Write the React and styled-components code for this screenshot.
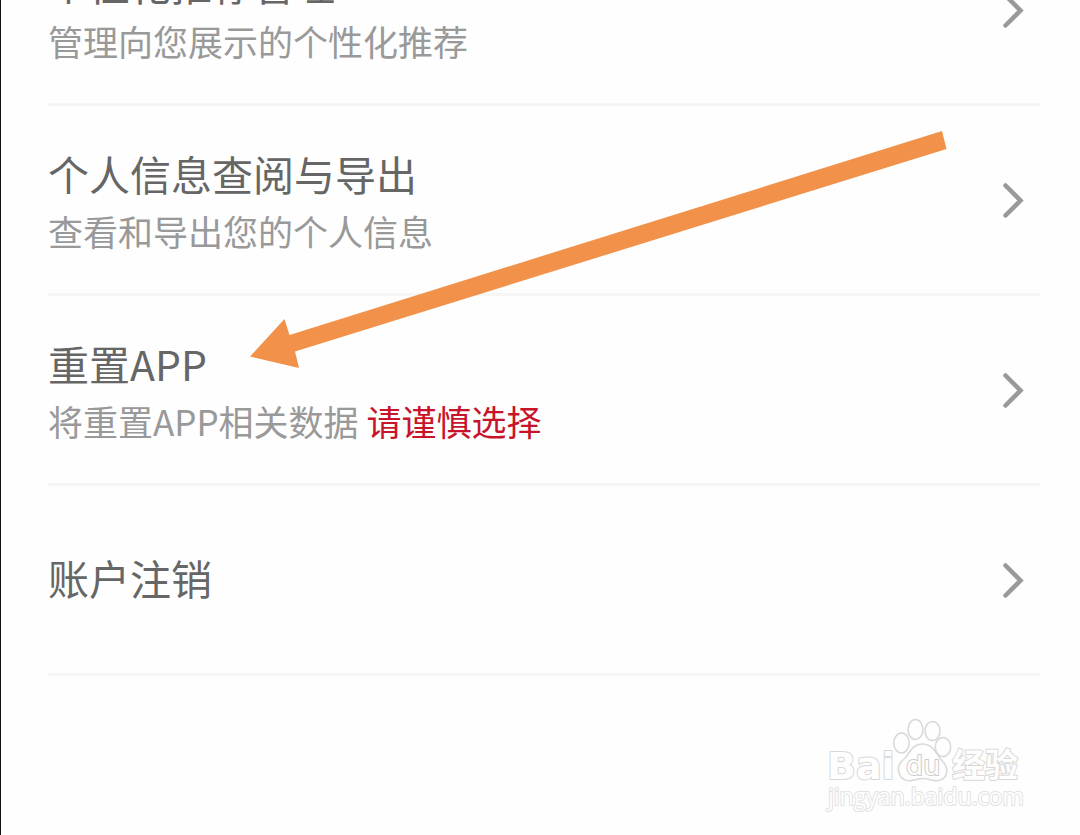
import React from 'react'
import styled, { createGlobalStyle } from 'styled-components'

const GlobalStyle = createGlobalStyle`
  body {
    margin: 0;
    background: #fefefe;
    font-family: 'Noto Sans CJK SC', 'Noto Sans', sans-serif;
  }
`
const Page = styled.main`
  box-sizing: border-box;
  position: relative;
  min-height: 100vh;
  padding: 0 40px 0 47px;
  border-left: 1px solid #111;
  background: #fefefe;
  overflow: hidden;
`
/* the list is scrolled a little, so the first row is cut by the top edge */
const SettingsList = styled.ul`
  margin: -84px 0 0;
  padding: 0;
  list-style: none;
`
const Row = styled.li`
  border-bottom: 3px solid #f6f6f6;
`
const RowLink = styled.a`
  display: flex;
  align-items: center;
  justify-content: space-between;
  height: 187px;
  padding-right: 15px;
  color: inherit;
  text-decoration: none;
`
const RowText = styled.div`
  display: flex;
  flex-direction: column;
  padding: ${(props) => (props.$double ? '4px 0 0' : '0 0 6px')};
`
const Title = styled.span`
  font-size: 41px;
  line-height: 58px;
  color: #666;
`
const Description = styled.span`
  font-size: 35px;
  line-height: 58px;
  color: #999;
`
const Warning = styled.span`
  color: #c7142a;
`
const Arrow = styled.svg`
  position: absolute;
  top: 131px;
  left: 248px;
  pointer-events: none;
`
const Watermark = styled.svg`
  position: absolute;
  right: 52px;
  bottom: 16px;
  overflow: visible;
  pointer-events: none;
`
const MarkText = styled.text`
  font-family: ${(props) => props.$font};
  font-size: ${(props) => props.$size}px;
  font-weight: ${(props) => props.$weight || 700};
  fill: #fefefe;
  stroke: ${(props) => props.$stroke || '#d8d8d8'};
  stroke-width: 2px;
  stroke-linejoin: round;
  paint-order: stroke;
`

const rows = [
  { title: '个性化推荐管理', description: '管理向您展示的个性化推荐' },
  { title: '个人信息查阅与导出', description: '查看和导出您的个人信息' },
  { title: '重置APP', description: '将重置APP相关数据', warning: '请谨慎选择' },
  { title: '账户注销' }
]

const Chevron = () => (
  <svg width="24" height="36" viewBox="0 0 24 36" fill="none" aria-hidden="true">
    <path d="M4.500 3.500L19.500 18.500L4.500 33.500" stroke="#999" strokeWidth="4.500" strokeLinecap="round" />
  </svg>
)

const BaiduMark = () => (
  <Watermark width="200" height="104" viewBox="0 0 200 104" aria-label="Baidu 经验">
    <MarkText x="-1" y="64" $size="38" $font="'DejaVu Sans', sans-serif">Bai</MarkText>
    <g fill="#fefefe" stroke="#d8d8d8" strokeWidth="1.500">
      <ellipse cx="73.500" cy="28" rx="7.700" ry="10" />
      <ellipse cx="87.500" cy="14.500" rx="7.500" ry="10" />
      <ellipse cx="104.500" cy="16" rx="7.500" ry="9.500" />
      <ellipse cx="115" cy="32" rx="7.700" ry="9.500" />
      <path d="M94 29C84 29 82 38 77 43C72 47 69 52 71 58C73 65 80 67 86 65C92 63 98 63 103 65C110 67 117 65 118.500 58C120 51 115 47 111 42C107 36 104 29 94 29Z" />
    </g>
    <MarkText x="78" y="60" $size="27" $weight="400" $stroke="#ccc" $font="'DejaVu Sans', sans-serif">du</MarkText>
    <MarkText x="124" y="62" $size="33" $font="'Noto Sans CJK SC', sans-serif">经验</MarkText>
    <MarkText x="0" y="90" $size="23" $weight="400" $stroke="#e2e2e2" $font="'Open Sans', sans-serif">
      jingyan.baidu.com
    </MarkText>
  </Watermark>
)

const App = () => {
  return (
    <>
      <GlobalStyle />
      <Page>
        <SettingsList>
          {rows.map((row) => (
            <Row key={row.title}>
              <RowLink href="#">
                <RowText $double={Boolean(row.description)}>
                  <Title>{row.title}</Title>
                  {row.description && (
                    <Description>
                      {row.description}
                      {row.warning && <Warning> {row.warning}</Warning>}
                    </Description>
                  )}
                </RowText>
                <Chevron />
              </RowLink>
            </Row>
          ))}
        </SettingsList>
        <Arrow width="698" height="238" viewBox="0 0 698 238" aria-hidden="true">
          <path d="M1 225.500L35.500 188L40.500 204L693 0L697.500 18L46 220.500L50 237Z" fill="#f2924a" />
        </Arrow>
        <BaiduMark />
      </Page>
    </>
  )
}

export default App
